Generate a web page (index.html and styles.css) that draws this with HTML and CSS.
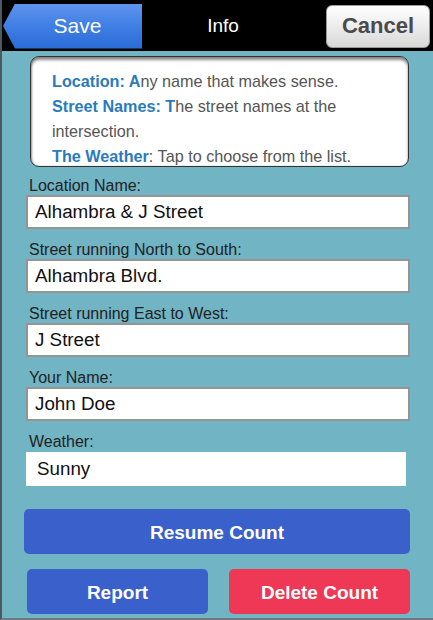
FILE: index.html
```html
<!DOCTYPE html>
<html>
<head>
<meta charset="utf-8">
<link rel="stylesheet" href="styles.css">
</head>
<body>
<div class="screen">
  <header class="navbar">
    <div class="save-btn"><span>Save</span></div>
    <div class="title">Info</div>
    <div class="cancel-btn">Cancel</div>
  </header>
  <main class="content">
    <div class="info-box">
      <p><b>Location: A</b>ny name that makes sense.</p>
      <p><b>Street Names: T</b><span>he street names at the</span></p>
      <p>intersection.</p>
      <p><b>The Weather</b>: Tap to choose from the list.</p>
    </div>
    <div class="field">
      <div class="label">Location Name:</div>
      <div class="input">Alhambra &amp; J Street</div>
    </div>
    <div class="field">
      <div class="label">Street running North to South:</div>
      <div class="input">Alhambra Blvd.</div>
    </div>
    <div class="field">
      <div class="label">Street running East to West:</div>
      <div class="input">J Street</div>
    </div>
    <div class="field">
      <div class="label">Your Name:</div>
      <div class="input">John Doe</div>
    </div>
    <div class="field">
      <div class="label">Weather:</div>
      <div class="select">Sunny</div>
    </div>
    <div class="btn btn-blue btn-wide">Resume Count</div>
    <div class="btn-row">
      <div class="btn btn-blue btn-half">Report</div>
      <div class="btn btn-red btn-half">Delete Count</div>
    </div>
  </main>
</div>
</body>
</html>
```
FILE: styles.css
```css
html, body {
  margin: 0;
  padding: 0;
}
body {
  width: 433px;
  height: 620px;
  overflow: hidden;
  font-family: "Liberation Sans", Arial, sans-serif;
}
.screen {
  width: 433px;
  height: 620px;
  background: #71b4c4;
  border-left: 2px solid #4a5a60;
  border-bottom: 2px solid #6a7c80;
  box-sizing: border-box;
  display: flex;
  flex-direction: column;
}
.navbar {
  height: 51px;
  background: #000;
  display: flex;
  align-items: center;
  padding: 0 3px 0 1px;
  flex-shrink: 0;
}
.save-btn {
  width: 139px;
  height: 45px;
  margin-top: 1px;
  background: linear-gradient(#5f94ec, #3f7ee4 50%, #2a6bd6);
  clip-path: polygon(12px 0, 100% 0, 100% 100%, 12px 100%, 0 50%);
  display: flex;
  align-items: center;
  justify-content: center;
  padding-left: 10px;
  box-sizing: border-box;
  color: #fff;
  font-size: 21px;
}
.title {
  flex: 1;
  text-align: center;
  color: #fff;
  font-size: 19px;
  padding-right: 22px;
}
.cancel-btn {
  width: 104px;
  height: 43px;
  box-sizing: border-box;
  border-radius: 6px;
  background: linear-gradient(#ffffff, #ececec 50%, #d8d8d8);
  border: 1px solid #9a9a9a;
  display: flex;
  align-items: center;
  justify-content: center;
  color: #4a4a4a;
  font-weight: bold;
  font-size: 22px;
  margin-top: 1px;
}
.content {
  flex: 1;
  display: flex;
  flex-direction: column;
  padding: 5px 0 0 22px;
}
.info-box {
  width: 379px;
  height: 111px;
  margin-left: 6px;
  box-sizing: border-box;
  background: #fff;
  border: 1px solid #333;
  border-radius: 9px;
  box-shadow: inset 0 3px 3px rgba(0,0,0,0.45), inset 1px 0 2px rgba(0,0,0,0.25);
  padding: 12px 12px 0 21px;
  font-size: 16.2px;
  color: #555;
  line-height: 25px;
}
.info-box p {
  margin: 0;
  white-space: nowrap;
}
.info-box b {
  color: #2a7bbc;
}
.field {
  display: flex;
  flex-direction: column;
  margin-top: 10px;
}
.field + .field {
  margin-top: 12px;
}
.label {
  font-size: 16px;
  line-height: 18px;
  color: #222;
  padding-left: 5px;
}
.input {
  width: 384px;
  height: 34px;
  margin-left: 2px;
  box-sizing: border-box;
  background: #fff;
  border: 2px solid #949494;
  padding-left: 7px;
  font-size: 18.8px;
  color: #111;
  display: flex;
  align-items: center;
}
.select {
  width: 380px;
  height: 34px;
  margin-left: 2px;
  margin-top: 1px;
  box-sizing: border-box;
  background: #fff;
  padding-left: 11px;
  font-size: 18.8px;
  color: #111;
  display: flex;
  align-items: center;
}
.btn {
  height: 45px;
  box-sizing: border-box;
  border-radius: 5px;
  padding-top: 3px;
  color: #fff;
  font-weight: bold;
  font-size: 19px;
  display: flex;
  align-items: center;
  justify-content: center;
}
.btn-blue {
  background: #3a60cc;
}
.btn-red {
  background: #ee3856;
}
.btn-wide {
  width: 386px;
  margin-top: 23px;
}
.btn-row {
  display: flex;
  gap: 21px;
  margin-top: 15px;
  padding-left: 3px;
}
.btn-half {
  width: 181px;
}
```
